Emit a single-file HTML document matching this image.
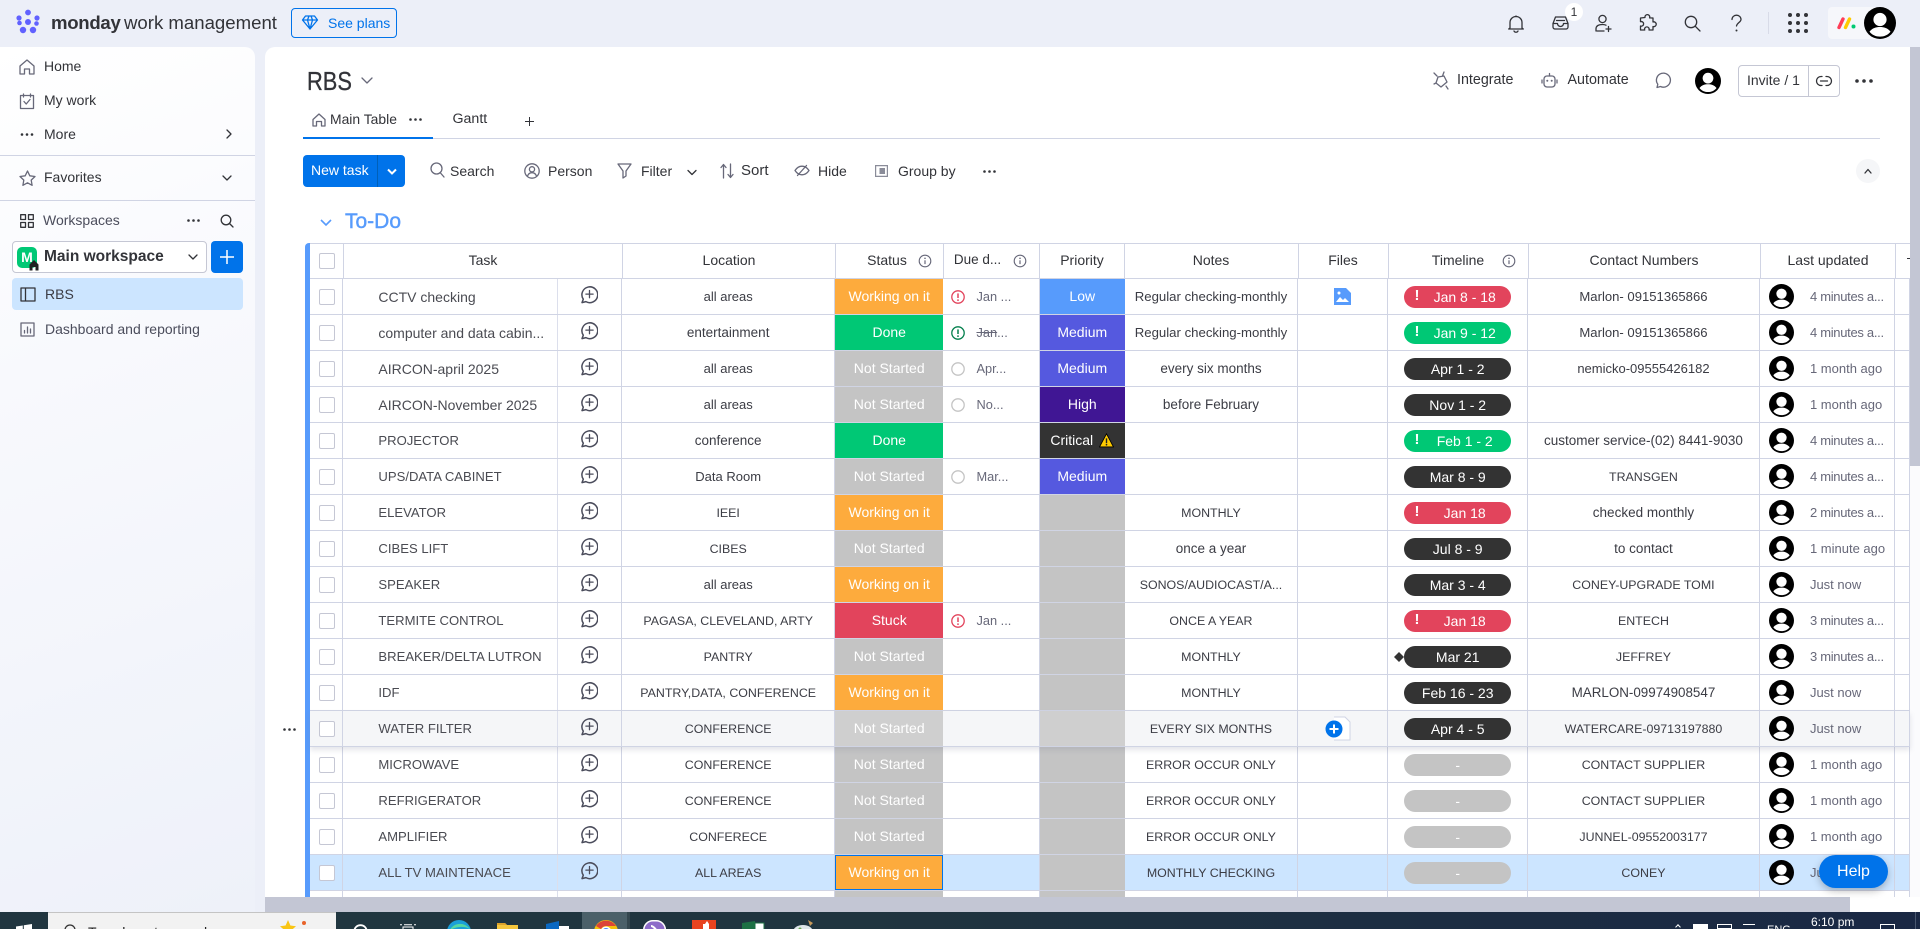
<!DOCTYPE html>
<html><head><meta charset="utf-8"><title>RBS</title>
<style>
*{box-sizing:border-box}
html,body{margin:0;padding:0;width:1920px;height:929px;overflow:hidden;background:#eceff8;font-family:"Liberation Sans",sans-serif;color:#323338;font-size:14px}
.a{position:absolute;white-space:nowrap;line-height:18px}
svg.a{overflow:visible}
.ln{fill:none;stroke:#323338;stroke-width:1.3;stroke-linecap:round;stroke-linejoin:round}
.g{fill:none;stroke:#676879;stroke-width:1.3;stroke-linecap:round;stroke-linejoin:round}
#side{position:absolute;left:0;top:47px;width:255px;height:865px;border-radius:0 10px 0 0;background:linear-gradient(160deg,#fff 0%,#f8f9fd 35%,#eef1f9 100%)}
#main{position:absolute;left:265px;top:47px;width:1645px;height:850px;background:#fff;border-radius:10px 0 0 0}
.sep{position:absolute;height:1px;background:#d0d4e4}
.r{position:absolute;left:310px;width:1600px;height:36px;display:grid;grid-template-columns:33.4px 214.2px 64.8px 212.6px 108.5px 96.5px 84.6px 173.8px 90.1px 139.5px 232px 135.5px 14.5px;border-bottom:1px solid #d0d4e4;background:#fff}
.r>span{display:flex;align-items:center;justify-content:center;border-right:1px solid #d0d4e4;white-space:nowrap;overflow:hidden;font-size:13.5px;color:#3b3c44;position:relative}
.r>span.t{justify-content:flex-start;padding-left:35px;font-size:14px;color:#4a4b52;border-right:1px solid #d0d4e4}
.r>span.c{font-size:12.4px}
.r>span.t.c{font-size:13.1px}
.r>span:first-child{justify-content:flex-start;padding-left:9px}
.r>span:nth-child(2){border-right:1px solid #dcdfec}
.r>span:nth-child(3) svg{position:relative;top:-1.5px}
.cb{display:block;width:16px;height:16px;border:1px solid #c5c7d4;border-radius:2px;background:#fff}
.s{color:#fff!important;font-size:14px!important;border-right:0!important;padding-bottom:1px}
.or{background:#fdab3d}.gr{background:#00c875}.ns{background:#c4c4c4}.st{background:#e2445c}
.lo{background:#579bfc}.me{background:#5559df}.hi{background:#401694}.cr{background:#333}.em{background:#c4c4c4}
.d{justify-content:flex-start!important;padding-left:8px;color:#676879!important;font-size:12.8px!important}
.d svg{margin-right:11px;flex:none}
.p{display:block;width:107.5px;height:22px;border-radius:11px;color:#fff;text-align:center;line-height:22px;font-size:14px;position:relative;font-weight:normal}
.p.x{padding-left:14px}
.p.x:before{content:"!";position:absolute;left:10.5px;top:-1px;font-weight:bold;font-size:15px}
.rd{background:#e2445c}.gn{background:#00c875}.dk{background:#333}.gy{background:#c4c4c4}
.u{justify-content:flex-start!important;padding-left:9px;color:#676879!important;font-size:13px!important}
.u.mn{letter-spacing:-.3px}
.u svg{margin-right:16px;flex:none}
.hd{position:absolute;left:310px;top:243px;width:1600px;height:36px;border-top:1px solid #d0d4e4;border-bottom:1px solid #d0d4e4;background:#fff}
.hd i{position:absolute;top:0;width:1px;height:35px;background:#d0d4e4}
.hd span{position:absolute;top:7px;line-height:18px;font-size:14px;color:#323338;transform:translateX(-50%);white-space:nowrap}
.bar{position:absolute;left:305px;top:243px;width:6px;height:654px;background:#579bfc;border-radius:4px 0 0 0}
#tb{position:absolute;left:0;top:912px;width:1920px;height:17px;overflow:hidden;background:linear-gradient(90deg,#213640 0%,#203540 45%,#1c2d42 75%,#1a2844 100%)}
</style></head><body>
<svg width="0" height="0" style="position:absolute">
<defs>
<symbol id="cm" viewBox="0 0 18 18"><path d="M2 16.600l1.300-3.400A7.900 7.900 0 1 1 5.900 15.600z" fill="none" stroke="#4b4d5c" stroke-width="1.500" stroke-linejoin="round"/><path d="M9.500 4.500v7.200M5.900 8.100h7.200" stroke="#4b4d5c" stroke-width="1.300" stroke-linecap="round"/></symbol>
<symbol id="av" viewBox="0 0 32 32"><circle cx="16" cy="16" r="16" fill="#000"/><circle cx="16" cy="12.5" r="6.6" fill="#fff"/><path d="M5.5 24.6C8.5 21 12 20 16 20s7.5 1 10.5 4.600C24 28 20 29.600 16 29.600S8 28 5.500 24.600z" fill="#fff"/></symbol>
<symbol id="inf" viewBox="0 0 14 14"><circle cx="7" cy="7" r="5.800" fill="none" stroke="#676879" stroke-width="1.100"/><path d="M7 6.300v3.800" stroke="#676879" stroke-width="1.200"/><circle cx="7" cy="4.300" r=".8" fill="#676879"/></symbol>
<symbol id="al" viewBox="0 0 14 14"><circle cx="7" cy="7" r="6.200" fill="none" stroke="currentColor" stroke-width="1.300"/><path d="M7 3.400v4.600" stroke="currentColor" stroke-width="1.500"/><circle cx="7" cy="10.100" r=".9" fill="currentColor"/></symbol>
<symbol id="ci" viewBox="0 0 14 14"><circle cx="7" cy="7" r="6.200" fill="none" stroke="#c4c4c4" stroke-width="1.300"/></symbol>
<symbol id="dots" viewBox="0 0 13 3"><circle cx="1.500" cy="1.500" r="1.300" fill="#323338"/><circle cx="6.500" cy="1.500" r="1.300" fill="#323338"/><circle cx="11.500" cy="1.500" r="1.300" fill="#323338"/></symbol>
</defs></svg>

<!-- TOP BAR -->
<svg class="a" style="left:15px;top:8px" width="28" height="28" viewBox="0 0 28 28"><g fill="#6161ff"><circle cx="13" cy="4.500" r="2.900"/><circle cx="4" cy="10" r="2.600"/><circle cx="22" cy="10" r="2.600"/><circle cx="4.500" cy="15" r="2.300"/><circle cx="21.500" cy="15.500" r="2.300"/><circle cx="8" cy="22" r="3.200"/><circle cx="18" cy="22" r="3.200"/><circle cx="13" cy="14" r="3"/></g></svg>
<div class="a" style="left:51px;top:13px;font-size:18.6px;line-height:20px;font-weight:bold;color:#323338;letter-spacing:-.3px">monday</div>
<div class="a" style="left:124px;top:13px;font-size:18.6px;line-height:20px;color:#323338">work management</div>
<div class="a" style="left:291px;top:8px;width:106px;height:30px;border:1px solid #0073ea;border-radius:4px"></div>
<svg class="a" style="left:302px;top:15px" width="16" height="15" viewBox="0 0 16 15"><path d="M3.500 1h9L15.500 5 8 14 .5 5zM.5 5h15M5.500 5L8 14l2.500-9M5.500 5L7 1M10.500 5L9 1" fill="none" stroke="#0073ea" stroke-width="1.300" stroke-linejoin="round"/></svg>
<div class="a" style="left:328px;top:14px;color:#0073ea;font-size:14px">See plans</div>

<svg class="a" style="left:1507px;top:14px" width="18" height="19" viewBox="0 0 18 19"><path class="ln" d="M3 14V8.500a6 6 0 0 1 12 0V14l1.300 1H1.700zM7 17a2.200 2.200 0 0 0 4 0"/><path class="ln" d="M9 2v.6"/></svg>
<svg class="a" style="left:1552px;top:15px" width="17" height="16" viewBox="0 0 17 16"><path class="ln" d="M1 8.500L3.500 2h10L16 8.500V12a2 2 0 0 1-2 2H3a2 2 0 0 1-2-2zM1 8.500h4.500a3 3 0 0 0 6 0H16"/><path class="ln" d="M4.500 5.500h8"/></svg>
<div class="a" style="left:1565px;top:3px;width:18px;height:18px;border-radius:9px;background:#fff;text-align:center;font-size:12px;line-height:18px">1</div>
<svg class="a" style="left:1595px;top:14px" width="18" height="19" viewBox="0 0 18 19"><circle class="ln" cx="7.500" cy="5" r="3.600"/><path class="ln" d="M1 17v-2c0-3 2.500-4.500 6.500-4.500 1.500 0 2.500.2 3.500.7M2 17h7M13.500 12.500v5M11 15h5"/></svg>
<svg class="a" style="left:1639px;top:14px" width="17" height="18" viewBox="0 0 17 18"><path class="ln" d="M6 3.500a2.400 2.400 0 1 1 4.600.4L14 4v4a2.400 2.400 0 1 1 0 4.500V16H10a2.300 2.300 0 1 0-4.300 0H1.500v-4a2.300 2.300 0 1 0 0-4.300V4z"/></svg>
<svg class="a" style="left:1684px;top:15px" width="17" height="17" viewBox="0 0 17 17"><circle class="ln" cx="7" cy="7" r="5.700"/><path class="ln" d="M11.200 11.200L16 16"/></svg>
<svg class="a" style="left:1731px;top:14px" width="11" height="19" viewBox="0 0 11 19"><path class="ln" d="M1 5.500C1 3 3 1.200 5.500 1.200S10 3 10 5.500 6 9 5.500 12"/><circle cx="5.500" cy="16.500" r="1" fill="#323338"/></svg>
<div class="a" style="left:1768px;top:12px;width:1px;height:22px;background:#d8dbe8"></div>
<svg class="a" style="left:1788px;top:13px" width="20" height="20" viewBox="0 0 20 20"><g fill="#323338"><circle cx="2" cy="2" r="2"/><circle cx="10" cy="2" r="2"/><circle cx="18" cy="2" r="2"/><circle cx="2" cy="10" r="2"/><circle cx="10" cy="10" r="2"/><circle cx="18" cy="10" r="2"/><circle cx="2" cy="18" r="2"/><circle cx="10" cy="18" r="2"/><circle cx="18" cy="18" r="2"/></g></svg>
<div class="a" style="left:1828px;top:7px;width:60px;height:32px;background:#f6f7fb;border-radius:4px"></div>
<svg class="a" style="left:1837px;top:17px" width="19" height="12" viewBox="0 0 19 12"><path d="M2 10.500L6 2" stroke="#ff3d57" stroke-width="3.400" stroke-linecap="round"/><path d="M8.500 10.500L12.500 2" stroke="#ffcb00" stroke-width="3.400" stroke-linecap="round"/><circle cx="16.500" cy="9.500" r="2" fill="#00ca72"/></svg>
<svg class="a" style="left:1864px;top:7px" width="32" height="32"><use href="#av"/></svg>

<!-- SIDEBAR -->
<div id="side"></div>
<svg class="a" style="left:19px;top:59px" width="16" height="16" viewBox="0 0 16 16"><path class="g" d="M1 7l7-6 7 6v8h-4.500v-5h-5v5H1z"/></svg>
<div class="a" style="left:44px;top:57px">Home</div>
<svg class="a" style="left:19px;top:93px" width="16" height="16" viewBox="0 0 16 16"><path class="g" d="M1.500 2.500h13v13h-13zM4.500 1v3M11.500 1v3M5 8.500l2.200 2.500L11 6.500"/></svg>
<div class="a" style="left:44px;top:91px">My work</div>
<svg class="a" style="left:20px;top:133px" width="14" height="3"><use href="#dots"/></svg>
<div class="a" style="left:44px;top:125px">More</div>
<svg class="a" style="left:225px;top:129px" width="8" height="10" viewBox="0 0 8 10"><path class="ln" d="M2 1l4 4-4 4"/></svg>
<div class="sep" style="left:0;top:155px;width:255px"></div>
<svg class="a" style="left:19px;top:170px" width="17" height="16" viewBox="0 0 17 16"><path class="g" d="M8.500 1l2.300 4.800 5.200.7-3.800 3.600.9 5.200-4.600-2.500-4.600 2.500.9-5.200L1 6.500l5.200-.7z"/></svg>
<div class="a" style="left:44px;top:168px">Favorites</div>
<svg class="a" style="left:222px;top:174px" width="10" height="8" viewBox="0 0 10 8"><path class="ln" d="M1 2l4 4 4-4"/></svg>
<div class="sep" style="left:0;top:200px;width:255px"></div>
<svg class="a" style="left:20px;top:214px" width="14" height="14" viewBox="0 0 14 14"><path class="ln" d="M.7.700h4.800v4.800H.7zM8.500.700h4.800v4.800H8.500zM.7 8.500h4.800v4.800H.7zM8.500 8.500h4.800v4.800H8.500z"/></svg>
<div class="a" style="left:43px;top:211px;color:#4b4d5c">Workspaces</div>
<svg class="a" style="left:187px;top:219px" width="13" height="3"><use href="#dots"/></svg>
<svg class="a" style="left:220px;top:214px" width="14" height="14" viewBox="0 0 14 14"><circle class="ln" cx="6" cy="6" r="4.800"/><path class="ln" d="M9.500 9.500L13 13"/></svg>
<div class="a" style="left:12px;top:241px;width:195px;height:32px;border:1px solid #c5c7d4;border-radius:4px;background:#fff"></div>
<div class="a" style="left:17px;top:247px;width:20px;height:21px;border-radius:5px;background:#00c875;color:#fff;text-align:center;font-weight:bold;font-size:14px;line-height:20px">M</div>
<svg class="a" style="left:28px;top:259px" width="12" height="12" viewBox="0 0 12 12"><path d="M1.500 5.500L6 1l4.500 4.500V11.500h-3V8h-3v3.500h-3z" fill="#222"/></svg>
<div class="a" style="left:44px;top:248px;font-size:15.500px;font-weight:bold;color:#323338">Main workspace</div>
<svg class="a" style="left:188px;top:253px" width="10" height="8" viewBox="0 0 10 8"><path class="ln" d="M1 2l4 4 4-4"/></svg>
<div class="a" style="left:211px;top:241px;width:32px;height:32px;border-radius:4px;background:#0073ea"></div>
<svg class="a" style="left:219px;top:249px" width="16" height="16" viewBox="0 0 16 16"><path d="M8 1v14M1 8h14" stroke="#fff" stroke-width="1.500"/></svg>
<div class="a" style="left:12px;top:278px;width:231px;height:32px;border-radius:4px;background:#cce5ff"></div>
<svg class="a" style="left:20px;top:287px" width="16" height="15" viewBox="0 0 16 15"><path class="ln" d="M1 1h14v13H1zM5.500 1v13"/></svg>
<div class="a" style="left:45px;top:285px;color:#3b3c44">RBS</div>
<svg class="a" style="left:20px;top:322px" width="15" height="15" viewBox="0 0 15 15"><path class="g" d="M1 1h13v13H1zM4.500 11V8.500M7.500 11V5M10.500 11V7"/></svg>
<div class="a" style="left:45px;top:320px;color:#4b4d5c">Dashboard and reporting</div>

<!-- MAIN -->
<div id="main"></div>
<div class="a" style="left:307px;top:67px;font-size:26px;line-height:28px;color:#323338;transform:scaleX(.84);transform-origin:0 0;-webkit-text-stroke:.3px #323338">RBS</div>
<svg class="a" style="left:361px;top:76px" width="12" height="9" viewBox="0 0 12 9"><path class="g" d="M1 2l5 5 5-5"/></svg>
<svg class="a" style="left:1433px;top:71px" width="16" height="19" viewBox="0 0 16 19"><path class="g" d="M1 2l3 3M13 15l2 3M5 6l6-1 3 6-6 5-5-4zM11 1l-1.500 4M1 13l2-1"/></svg>
<div class="a" style="left:1457px;top:71px;color:#323338;font-size:14.3px">Integrate</div>
<svg class="a" style="left:1541px;top:72px" width="17" height="17" viewBox="0 0 17 17"><rect class="g" x="3" y="4" width="11" height="11" rx="3"/><path class="g" d="M8.500 1.500V4M1 8v3M16 8v3"/><circle cx="6.300" cy="8.800" r="1" fill="#676879"/><circle cx="10.700" cy="8.800" r="1" fill="#676879"/></svg>
<div class="a" style="left:1567.500px;top:71px;color:#323338;font-size:14.300px">Automate</div>
<svg class="a" style="left:1655px;top:72px" width="16" height="17" viewBox="0 0 16 17"><path class="g" d="M2 15.500l.8-3.200A7 7 0 1 1 5.500 14.500z"/></svg>
<svg class="a" style="left:1695px;top:68px" width="26" height="26"><use href="#av"/></svg>
<div class="a" style="left:1738px;top:65px;width:102px;height:32px;border:1px solid #c5c7d4;border-radius:4px"></div>
<div class="a" style="left:1808px;top:65px;width:1px;height:32px;background:#c5c7d4"></div>
<div class="a" style="left:1747px;top:71px">Invite / 1</div>
<svg class="a" style="left:1816px;top:74px" width="16" height="14" viewBox="0 0 16 14"><path class="ln" d="M6 2.500H5a4.500 4.500 0 0 0 0 9h1M10 2.500h1a4.500 4.500 0 0 1 0 9h-1M4.500 7h7"/></svg>
<svg class="a" style="left:1855px;top:79px" width="18" height="4" viewBox="0 0 18 4"><circle cx="2" cy="2" r="1.800" fill="#323338"/><circle cx="9" cy="2" r="1.800" fill="#323338"/><circle cx="16" cy="2" r="1.800" fill="#323338"/></svg>

<!-- tabs -->
<div class="sep" style="left:303px;top:138px;width:1577px"></div>
<div class="a" style="left:303px;top:137px;width:130px;height:2px;background:#0073ea"></div>
<svg class="a" style="left:312px;top:113px" width="14" height="14" viewBox="0 0 14 14"><path class="g" d="M1 6.500L7 1l6 5.500V13H9.500V8.500h-5V13H1z"/></svg>
<div class="a" style="left:330px;top:110px;font-size:13.900px">Main Table</div>
<svg class="a" style="left:409px;top:118px" width="13" height="3"><use href="#dots"/></svg>
<div class="a" style="left:452.500px;top:110px;font-size:14.200px">Gantt</div>
<svg class="a" style="left:525px;top:117px" width="9" height="9" viewBox="0 0 9 9"><path d="M4.500 0v9M0 4.500h9" stroke="#323338"/></svg>

<!-- toolbar -->
<div class="a" style="left:303px;top:155px;width:102px;height:32px;background:#0073ea;border-radius:4px"></div>
<div class="a" style="left:377px;top:155px;width:1px;height:32px;background:#0060b9"></div>
<div class="a" style="left:311px;top:161px;color:#fff;font-size:14px">New task</div>
<svg class="a" style="left:387px;top:168px" width="10" height="8" viewBox="0 0 10 8"><path d="M1 1.500l4 4 4-4" fill="none" stroke="#fff" stroke-width="2"/></svg>
<svg class="a" style="left:430px;top:162px" width="15" height="16" viewBox="0 0 15 16"><circle class="g" cx="6.500" cy="6.500" r="5.500"/><path class="g" d="M10.500 11l3.500 4"/></svg>
<div class="a" style="left:450px;top:162px">Search</div>
<svg class="a" style="left:524px;top:163px" width="16" height="16" viewBox="0 0 16 16"><circle class="g" cx="8" cy="8" r="7.200"/><circle class="g" cx="8" cy="6.300" r="2.600"/><path class="g" d="M3.500 13c1-2.500 2.500-3.300 4.500-3.300s3.500.8 4.500 3.300"/></svg>
<div class="a" style="left:548px;top:162px">Person</div>
<svg class="a" style="left:617px;top:163px" width="15" height="16" viewBox="0 0 15 16"><path class="g" d="M1 1h13L9 8v5l-3 2V8z"/></svg>
<div class="a" style="left:641px;top:162px">Filter</div>
<svg class="a" style="left:687px;top:169px" width="10" height="7" viewBox="0 0 10 7"><path class="ln" d="M1 1.500l4 4 4-4"/></svg>
<svg class="a" style="left:720px;top:163px" width="14" height="16" viewBox="0 0 14 16"><path class="g" d="M3.500 15V1.500M1 4.500l2.500-3 2.500 3M10.500 1v13.500M8 11.500l2.500 3 2.500-3"/></svg>
<div class="a" style="left:741px;top:162px;font-size:15px">Sort</div>
<svg class="a" style="left:794px;top:164px" width="16" height="13" viewBox="0 0 16 13"><path class="g" d="M1 6.500C3 3.500 5.500 2.200 8 2.200s5 1.300 7 4.300c-2 3-4.500 4.300-7 4.300S3 9.500 1 6.500zM3.500 11.500L12.500 1.500"/></svg>
<div class="a" style="left:818px;top:162px">Hide</div>
<svg class="a" style="left:875px;top:165px" width="13" height="12" viewBox="0 0 13 12"><path d="M.6.600h11.800v10.800H.6z" fill="none" stroke="#8a8c99" stroke-width="1.200"/><path d="M4.500 3h5.500v6H4.500z" fill="#8a8c99"/></svg>
<div class="a" style="left:898px;top:162px">Group by</div>
<svg class="a" style="left:983px;top:170px" width="13" height="3"><use href="#dots"/></svg>
<div class="a" style="left:1856px;top:159px;width:24px;height:24px;border-radius:12px;background:#f5f6f8"></div>
<svg class="a" style="left:1864px;top:168px" width="8" height="6" viewBox="0 0 8 6"><path class="ln" d="M1 5l3-3.500L7 5"/></svg>

<svg class="a" style="left:320px;top:218px" width="12" height="9" viewBox="0 0 12 9"><path d="M1 2l5 5 5-5" fill="none" stroke="#579bfc" stroke-width="1.600"/></svg>
<div class="a" style="left:345px;top:212px;font-size:21px;line-height:20px;color:#579bfc;-webkit-text-stroke:.4px #579bfc">To-Do</div>

<!-- TABLE -->
<div class="bar"></div>
<div class="hd">
<i style="left:33px"></i><i style="left:312px"></i><i style="left:525px"></i><i style="left:633px"></i><i style="left:729px"></i><i style="left:814px"></i><i style="left:988px"></i><i style="left:1078px"></i><i style="left:1218px"></i><i style="left:1450px"></i><i style="left:1585px"></i>
<b class="cb" style="position:absolute;left:9px;top:9px"></b>
<span style="left:173px">Task</span><span style="left:419px">Location</span><span style="left:577px">Status</span><span style="left:667.500px;font-size:13.500px">Due d...</span><span style="left:772px">Priority</span><span style="left:901px">Notes</span><span style="left:1033px">Files</span><span style="left:1148px">Timeline</span><span style="left:1334px">Contact Numbers</span><span style="left:1518px">Last updated</span>
<svg class="a" style="left:608px;top:10px" width="14" height="14"><use href="#inf"/></svg>
<svg class="a" style="left:703px;top:10px" width="14" height="14"><use href="#inf"/></svg>
<svg class="a" style="left:1192px;top:10px" width="14" height="14"><use href="#inf"/></svg>
<div class="a" style="left:1597px;top:14px;width:3px;height:1px;background:#323338"></div>
</div>

<div class="r" style="top:279px"><span><b class="cb"></b></span><span class="t">CCTV checking</span><span><svg width="18" height="18"><use href="#cm"/></svg></span><span style="font-size:13px">all areas</span><span class="s or">Working on it</span><span class="d"><svg width="14" height="14" style="color:#e2445c"><use href="#al"/></svg>Jan ...</span><span class="s lo">Low</span><span style="font-size:13.200px">Regular checking-monthly</span><span><svg width="17" height="17" viewBox="0 0 17 17"><path d="M0 0h12l5 5v12H0z" fill="#579bfc"/><path d="M2 14l4-5 3 3 2-2 4 4z" fill="#fff"/><circle cx="5" cy="5" r="1.500" fill="#fff"/></svg></span><span><b class="p x rd">Jan 8 - 18</b></span><span style="font-size:13.100px">Marlon- 09151365866</span><span class="u mn"><svg width="25" height="25"><use href="#av"/></svg>4 minutes a...</span><span></span></div>

<div class="r" style="top:315px"><span><b class="cb"></b></span><span class="t">computer and data cabin...</span><span><svg width="18" height="18"><use href="#cm"/></svg></span><span>entertainment</span><span class="s gr">Done</span><span class="d"><svg width="14" height="14" style="color:#037f4c"><use href="#al"/></svg><s>Jan</s>...</span><span class="s me">Medium</span><span style="font-size:13.200px">Regular checking-monthly</span><span></span><span><b class="p x gn">Jan 9 - 12</b></span><span style="font-size:13.100px">Marlon- 09151365866</span><span class="u mn"><svg width="25" height="25"><use href="#av"/></svg>4 minutes a...</span><span></span></div>

<div class="r" style="top:351px"><span><b class="cb"></b></span><span class="t">AIRCON-april 2025</span><span><svg width="18" height="18"><use href="#cm"/></svg></span><span style="font-size:13px">all areas</span><span class="s ns">Not Started</span><span class="d"><svg width="14" height="14"><use href="#ci"/></svg>Apr...</span><span class="s me">Medium</span><span>every six months</span><span></span><span><b class="p dk">Apr 1 - 2</b></span><span style="font-size:13px">nemicko-09555426182</span><span class="u"><svg width="25" height="25"><use href="#av"/></svg>1 month ago</span><span></span></div>

<div class="r" style="top:387px"><span><b class="cb"></b></span><span class="t">AIRCON-November 2025</span><span><svg width="18" height="18"><use href="#cm"/></svg></span><span style="font-size:13px">all areas</span><span class="s ns">Not Started</span><span class="d"><svg width="14" height="14"><use href="#ci"/></svg>No...</span><span class="s hi">High</span><span>before February</span><span></span><span><b class="p dk">Nov 1 - 2</b></span><span></span><span class="u"><svg width="25" height="25"><use href="#av"/></svg>1 month ago</span><span></span></div>

<div class="r" style="top:423px"><span><b class="cb"></b></span><span class="t c">PROJECTOR</span><span><svg width="18" height="18"><use href="#cm"/></svg></span><span>conference</span><span class="s gr">Done</span><span class="d"></span><span class="s cr">Critical<svg width="15" height="15" viewBox="0 0 14 14" style="margin-left:6px"><path d="M7 .8L13.500 13H.5z" fill="#ffcb00" stroke="#000" stroke-width=".8"/><path d="M7 5v4.500" stroke="#222" stroke-width="1.300"/><circle cx="7" cy="11" r=".8" fill="#222"/></svg></span><span></span><span></span><span><b class="p x gn">Feb 1 - 2</b></span><span>customer service-(02) 8441-9030</span><span class="u mn"><svg width="25" height="25"><use href="#av"/></svg>4 minutes a...</span><span></span></div>

<div class="r" style="top:459px"><span><b class="cb"></b></span><span class="t c">UPS/DATA CABINET</span><span><svg width="18" height="18"><use href="#cm"/></svg></span><span style="font-size:13px">Data Room</span><span class="s ns">Not Started</span><span class="d"><svg width="14" height="14"><use href="#ci"/></svg>Mar...</span><span class="s me">Medium</span><span></span><span></span><span><b class="p dk">Mar 8 - 9</b></span><span class="c">TRANSGEN</span><span class="u mn"><svg width="25" height="25"><use href="#av"/></svg>4 minutes a...</span><span></span></div>

<div class="r" style="top:495px"><span><b class="cb"></b></span><span class="t c">ELEVATOR</span><span><svg width="18" height="18"><use href="#cm"/></svg></span><span class="c">IEEI</span><span class="s or">Working on it</span><span class="d"></span><span class="s em"></span><span class="c">MONTHLY</span><span></span><span><b class="p x rd">Jan 18</b></span><span>checked monthly</span><span class="u mn"><svg width="25" height="25"><use href="#av"/></svg>2 minutes a...</span><span></span></div>

<div class="r" style="top:531px"><span><b class="cb"></b></span><span class="t c">CIBES LIFT</span><span><svg width="18" height="18"><use href="#cm"/></svg></span><span class="c">CIBES</span><span class="s ns">Not Started</span><span class="d"></span><span class="s em"></span><span>once a year</span><span></span><span><b class="p dk">Jul 8 - 9</b></span><span>to contact</span><span class="u"><svg width="25" height="25"><use href="#av"/></svg>1 minute ago</span><span></span></div>

<div class="r" style="top:567px"><span><b class="cb"></b></span><span class="t c">SPEAKER</span><span><svg width="18" height="18"><use href="#cm"/></svg></span><span style="font-size:13px">all areas</span><span class="s or">Working on it</span><span class="d"></span><span class="s em"></span><span class="c">SONOS/AUDIOCAST/A...</span><span></span><span><b class="p dk">Mar 3 - 4</b></span><span class="c">CONEY-UPGRADE TOMI</span><span class="u"><svg width="25" height="25"><use href="#av"/></svg>Just now</span><span></span></div>

<div class="r" style="top:603px"><span><b class="cb"></b></span><span class="t c">TERMITE CONTROL</span><span><svg width="18" height="18"><use href="#cm"/></svg></span><span class="c">PAGASA, CLEVELAND, ARTY</span><span class="s st">Stuck</span><span class="d"><svg width="14" height="14" style="color:#e2445c"><use href="#al"/></svg>Jan ...</span><span class="s em"></span><span class="c">ONCE A YEAR</span><span></span><span><b class="p x rd">Jan 18</b></span><span class="c">ENTECH</span><span class="u mn"><svg width="25" height="25"><use href="#av"/></svg>3 minutes a...</span><span></span></div>

<div class="r" style="top:639px"><span><b class="cb"></b></span><span class="t c">BREAKER/DELTA LUTRON</span><span><svg width="18" height="18"><use href="#cm"/></svg></span><span class="c">PANTRY</span><span class="s ns">Not Started</span><span class="d"></span><span class="s em"></span><span class="c">MONTHLY</span><span></span><span><svg width="10" height="10" viewBox="0 0 10 10" style="position:absolute;left:6px;top:13px"><path d="M5 0l5 5-5 5-5-5z" fill="#333"/></svg><b class="p dk">Mar 21</b></span><span class="c">JEFFREY</span><span class="u mn"><svg width="25" height="25"><use href="#av"/></svg>3 minutes a...</span><span></span></div>

<div class="r" style="top:675px"><span><b class="cb"></b></span><span class="t c">IDF</span><span><svg width="18" height="18"><use href="#cm"/></svg></span><span class="c">PANTRY,DATA, CONFERENCE</span><span class="s or">Working on it</span><span class="d"></span><span class="s em"></span><span class="c">MONTHLY</span><span></span><span><b class="p dk">Feb 16 - 23</b></span><span style="font-size:13.400px">MARLON-09974908547</span><span class="u"><svg width="25" height="25"><use href="#av"/></svg>Just now</span><span></span></div>

<svg class="a" style="left:283px;top:728px" width="13" height="3"><use href="#dots"/></svg>
<div class="r" style="top:711px;background:#f5f6f8;box-shadow:0 3px 5px rgba(120,125,150,.2);z-index:2"><span><b class="cb"></b></span><span class="t c">WATER FILTER</span><span><svg width="18" height="18"><use href="#cm"/></svg></span><span class="c">CONFERENCE</span><span class="s" style="background:#cfcfcf">Not Started</span><span class="d"></span><span class="s" style="background:#cfcfcf"></span><span class="c">EVERY SIX MONTHS</span><span><svg width="26" height="26" viewBox="0 0 26 26" style="position:absolute;left:27px;top:5px"><path d="M9 1h11l5 5v18H9" fill="#fff" stroke="#d0d4e4"/><circle cx="9" cy="13" r="8.500" fill="#0073ea"/><path d="M9 8.500v9M4.500 13h9" stroke="#fff" stroke-width="2"/></svg></span><span><b class="p dk">Apr 4 - 5</b></span><span class="c">WATERCARE-09713197880</span><span class="u"><svg width="25" height="25"><use href="#av"/></svg>Just now</span><span></span></div>

<div class="r" style="top:747px"><span><b class="cb"></b></span><span class="t c">MICROWAVE</span><span><svg width="18" height="18"><use href="#cm"/></svg></span><span class="c">CONFERENCE</span><span class="s ns">Not Started</span><span class="d"></span><span class="s em"></span><span class="c">ERROR OCCUR ONLY</span><span></span><span><b class="p gy">-</b></span><span class="c">CONTACT SUPPLIER</span><span class="u"><svg width="25" height="25"><use href="#av"/></svg>1 month ago</span><span></span></div>

<div class="r" style="top:783px"><span><b class="cb"></b></span><span class="t c">REFRIGERATOR</span><span><svg width="18" height="18"><use href="#cm"/></svg></span><span class="c">CONFERENCE</span><span class="s ns">Not Started</span><span class="d"></span><span class="s em"></span><span class="c">ERROR OCCUR ONLY</span><span></span><span><b class="p gy">-</b></span><span class="c">CONTACT SUPPLIER</span><span class="u"><svg width="25" height="25"><use href="#av"/></svg>1 month ago</span><span></span></div>

<div class="r" style="top:819px"><span><b class="cb"></b></span><span class="t c">AMPLIFIER</span><span><svg width="18" height="18"><use href="#cm"/></svg></span><span class="c">CONFERECE</span><span class="s ns">Not Started</span><span class="d"></span><span class="s em"></span><span class="c">ERROR OCCUR ONLY</span><span></span><span><b class="p gy">-</b></span><span class="c">JUNNEL-09552003177</span><span class="u"><svg width="25" height="25"><use href="#av"/></svg>1 month ago</span><span></span></div>

<div class="r" style="top:855px;background:#cce5ff"><span><b class="cb"></b></span><span class="t c">ALL TV MAINTENACE</span><span><svg width="18" height="18"><use href="#cm"/></svg></span><span class="c">ALL AREAS</span><span class="s or" style="box-shadow:inset 0 0 0 1px #0073ea">Working on it</span><span class="d"></span><span class="s em"></span><span class="c">MONTHLY CHECKING</span><span></span><span><b class="p gy">-</b></span><span class="c">CONEY</span><span class="u"><svg width="25" height="25"><use href="#av"/></svg>Just now</span><span></span></div>

<div class="r" style="top:891px;height:6px;border-bottom:0"><span></span><span></span><span></span><span></span><span class="s ns"></span><span></span><span class="s em"></span><span></span><span></span><span></span><span></span><span><svg width="25" height="25" style="position:absolute;left:9px;top:6px"><use href="#av"/></svg></span><span></span></div>

<div class="a" style="left:1819px;top:855px;width:69px;height:33px;border-radius:17px;background:#0073ea;box-shadow:0 3px 8px rgba(0,0,0,.25);color:#fff;text-align:center;font-size:16px;line-height:33px;z-index:5">Help</div>

<!-- scrollbars -->
<div class="a" style="left:1910px;top:47px;width:10px;height:419px;background:#c3c6d4"></div>
<div class="a" style="left:1910px;top:466px;width:10px;height:446px;background:#fbfbfd"></div>
<div class="a" style="left:265px;top:897px;width:1585px;height:15px;background:#c3c6d4"></div>
<div class="a" style="left:1850px;top:897px;width:70px;height:15px;background:#fff"></div>

<!-- TASKBAR -->
<div id="tb">
<svg class="a" style="left:16px;top:12px" width="16" height="16" viewBox="0 0 16 16"><path d="M0 2.500L6.800 1.500V7.500H0zM7.800 1.300L16 0V7.500H7.800z" fill="#fff"/></svg>
<div class="a" style="left:48px;top:0;width:288px;height:17px;background:#f2f2f2;border-top:1px solid #c4c4c4"></div>
<svg class="a" style="left:64px;top:12px" width="12" height="12" viewBox="0 0 12 12"><circle cx="6" cy="6" r="5" fill="none" stroke="#333" stroke-width="1.300"/></svg>
<div class="a" style="left:88px;top:12px;font-size:14px;line-height:16px;color:#222">Type here to search</div>
<svg class="a" style="left:280px;top:8px" width="16" height="16" viewBox="0 0 16 16"><path d="M8 0l2.400 5.500L16 6.200l-4.200 3.700L13 16 8 12.700 3 16l1.200-6.100L0 6.200l5.600-.7z" fill="#f9c513"/></svg>
<div class="a" style="left:302px;top:9px;width:4px;height:4px;border-radius:2px;background:#e8632a"></div>
<svg class="a" style="left:353px;top:12px" width="15" height="15" viewBox="0 0 15 15"><circle cx="7.500" cy="7.500" r="6.300" fill="none" stroke="#fff" stroke-width="1.800"/></svg>
<svg class="a" style="left:400px;top:12px" width="16" height="10" viewBox="0 0 16 10"><path d="M0 .7h2M4 .7h8M14 .7h2M3 3h10v6H3z" fill="none" stroke="#fff"/></svg>
<svg class="a" style="left:447px;top:8px" width="24" height="24" viewBox="0 0 24 24"><circle cx="12" cy="12" r="12" fill="#1a9fd8"/><path d="M3 10C6 3 17 1 23 9c-5-3-13-3-20 1z" fill="#54d7a3"/></svg>
<svg class="a" style="left:497px;top:11px" width="21" height="10" viewBox="0 0 21 10"><path d="M0 0h8l2 2h11v10H0z" fill="#f5c63d"/><path d="M0 0h8l2 2H0z" fill="#dca22b"/></svg>
<svg class="a" style="left:546px;top:9px" width="23" height="10" viewBox="0 0 23 10"><path d="M0 3l13-3v12H0z" fill="#0a68c2"/><path d="M13 5h10v7H13z" fill="#fff"/></svg>
<div class="a" style="left:582px;top:0;width:45px;height:17px;background:#4b6069"></div>
<div class="a" style="left:627px;top:0;width:3px;height:17px;background:#34474f"></div>
<svg class="a" style="left:594px;top:8px" width="24" height="24" viewBox="0 0 24 24"><circle cx="12" cy="12" r="12" fill="#f4c20d"/><path d="M2 6a12 12 0 0 1 20 0H12a6 6 0 0 0-5 3z" fill="#db4437"/><circle cx="12" cy="12" r="5.500" fill="#fff"/><circle cx="12" cy="12" r="4" fill="#4285f4"/></svg>
<svg class="a" style="left:643px;top:8px" width="23" height="20" viewBox="0 0 23 20"><rect x="0.800" y="0.800" width="21.500" height="24" rx="9" fill="#8d6cc9" stroke="#fff" stroke-width="1.500"/><path d="M8 6c2 0 5 3 7 7" stroke="#fff" stroke-width="2" fill="none"/></svg>
<svg class="a" style="left:692px;top:8px" width="24" height="10" viewBox="0 0 24 10"><path d="M0 0h24v10H0z" fill="#e8431f"/><path d="M11 10V4h2l2-3 2 3v6z" fill="#fff"/></svg>
<svg class="a" style="left:742px;top:9px" width="22" height="10" viewBox="0 0 22 10"><path d="M0 2l13-2v10H0z" fill="#1d7044"/><path d="M13 2h9v8h-9z" fill="#fff" stroke="#1d7044"/></svg>
<svg class="a" style="left:793px;top:8px" width="21" height="12" viewBox="0 0 21 12"><path d="M15 0l5 3-3 3z" fill="#c79a5b"/><ellipse cx="10" cy="12" rx="10" ry="7" fill="#dfe6ea"/><circle cx="7" cy="9" r="1.500" fill="#6aa84f"/></svg>
<div class="a" style="left:1676px;top:13px;width:4px;height:4px;border-top:1px solid #fff;border-left:1px solid #fff;transform:rotate(45deg)"></div>
<div class="a" style="left:1693px;top:12px;width:15px;height:5px;background:#fff"></div>
<div class="a" style="left:1717px;top:12px;width:15px;height:5px;border:1px solid #fff"></div>
<div class="a" style="left:1743px;top:12px;width:12px;height:5px;border-top:1px solid #fff"></div>
<div class="a" style="left:1767px;top:12px;color:#fff;font-size:11px;line-height:13px">ENG</div>
<div class="a" style="left:1811px;top:3px;color:#fff;font-size:12px;line-height:14px">6:10 pm</div>
<div class="a" style="left:1880px;top:12px;width:15px;height:6px;border:1px solid #fff"></div>
<div class="a" style="left:1915px;top:0;width:1px;height:17px;background:#4a5870"></div>
</div>
</body></html>
